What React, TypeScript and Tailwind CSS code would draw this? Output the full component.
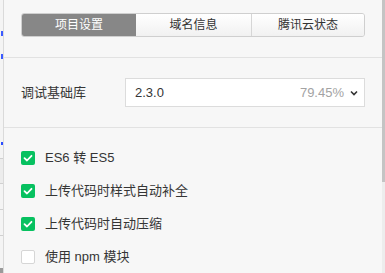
import React from "react";

function Check({ checked, label }: { checked: boolean; label: string }) {
  return (
    <div className="h-[33px] flex items-center gap-[10px]">
      {checked ? (
        <div className="w-[14px] h-[14px] rounded-[2px] bg-[#07c160] flex items-center justify-center">
          <svg width="12" height="12" viewBox="0 0 12 12">
            <path d="M2.5 6.2 L5 8.5 L9.5 3.8" fill="none" stroke="#fff" strokeWidth="1.8" strokeLinecap="round" strokeLinejoin="round" />
          </svg>
        </div>
      ) : (
        <div className="w-[14px] h-[14px] rounded-[2px] bg-white border border-[#d6d6d6]" />
      )}
      <span className="text-[13px] text-[#353535] leading-none">{label}</span>
    </div>
  );
}

export default function App() {
  return (
    <div className="w-[385px] h-[273px] flex overflow-hidden bg-[#f7f7f7] font-['Liberation_Sans','Noto_Sans_CJK_SC',sans-serif]">
      <div className="w-[4px] shrink-0 border-r border-[#dadada] bg-[#f4f4f4] flex flex-col">
        <div className="h-[31px]" />
        <div className="h-[5px] w-[2px] bg-[#3b5bff] ml-[1px]" />
        <div className="h-[18px]" />
        <div className="h-[5px] w-[2px] bg-[#3b5bff] ml-[1px]" />
        <div className="h-[83px]" />
        <div className="h-[3px] w-[2px] bg-[#2a4dff] ml-[1px]" />
        <div className="h-[13px]" />
        <div className="h-[25px] border-t border-[#d0d0d0] bg-[#ececec]" />
        <div className="h-[26px] border-t border-[#d0d0d0]" />
        <div className="h-[26px] border-t border-[#d0d0d0]" />
        <div className="flex-1 border-t border-[#d0d0d0]" />
        <div className="h-[5px] bg-[#9a9a9a]" />
      </div>
      <div className="flex-1 flex flex-col">
        <div className="h-[58px] pt-[13px] px-[17px] border-b border-[#e2e2e2]">
          <div className="h-[24px] flex rounded-[3px] border border-[#cfcfcf] overflow-hidden text-[12px] leading-none">
            <div className="w-[114px] bg-[#878787] text-white flex items-center justify-center">项目设置</div>
            <div className="w-[115px] bg-gradient-to-b from-white to-[#f1f1f1] text-[#333] flex items-center justify-center">域名信息</div>
            <div className="flex-1 border-l border-[#d6d6d6] bg-gradient-to-b from-white to-[#f1f1f1] text-[#333] flex items-center justify-center">腾讯云状态</div>
          </div>
        </div>
        <div className="h-[70px] pt-[20px] px-[17px] border-b border-[#e2e2e2] flex">
          <div className="w-[104px] h-[29px] flex items-center text-[13px] text-[#353535]">调试基础库</div>
          <div className="flex-1 h-[29px] bg-white border border-[#dcdcdc] flex items-center pl-[9px] pr-[6px] text-[13px]">
            <span className="text-[#353535] flex-1">2.3.0</span>
            <span className="text-[#a3a3a3]">79.45%</span>
            <svg className="ml-[6px]" width="8" height="6" viewBox="0 0 8 6">
              <path d="M1 1.5 L4 4.5 L7 1.5" fill="none" stroke="#333" strokeWidth="1.6" />
            </svg>
          </div>
        </div>
        <div className="pt-[13px] px-[17px] flex flex-col">
          <Check checked label="ES6 转 ES5" />
          <Check checked label="上传代码时样式自动补全" />
          <Check checked label="上传代码时自动压缩" />
          <Check checked={false} label="使用 npm 模块" />
        </div>
      </div>
      <div className="w-[3px] shrink-0 flex flex-col">
        <div className="h-[182px] bg-[#c4c4c4]" />
        <div className="flex-1 bg-[#ededed]" />
      </div>
    </div>
  );
}
